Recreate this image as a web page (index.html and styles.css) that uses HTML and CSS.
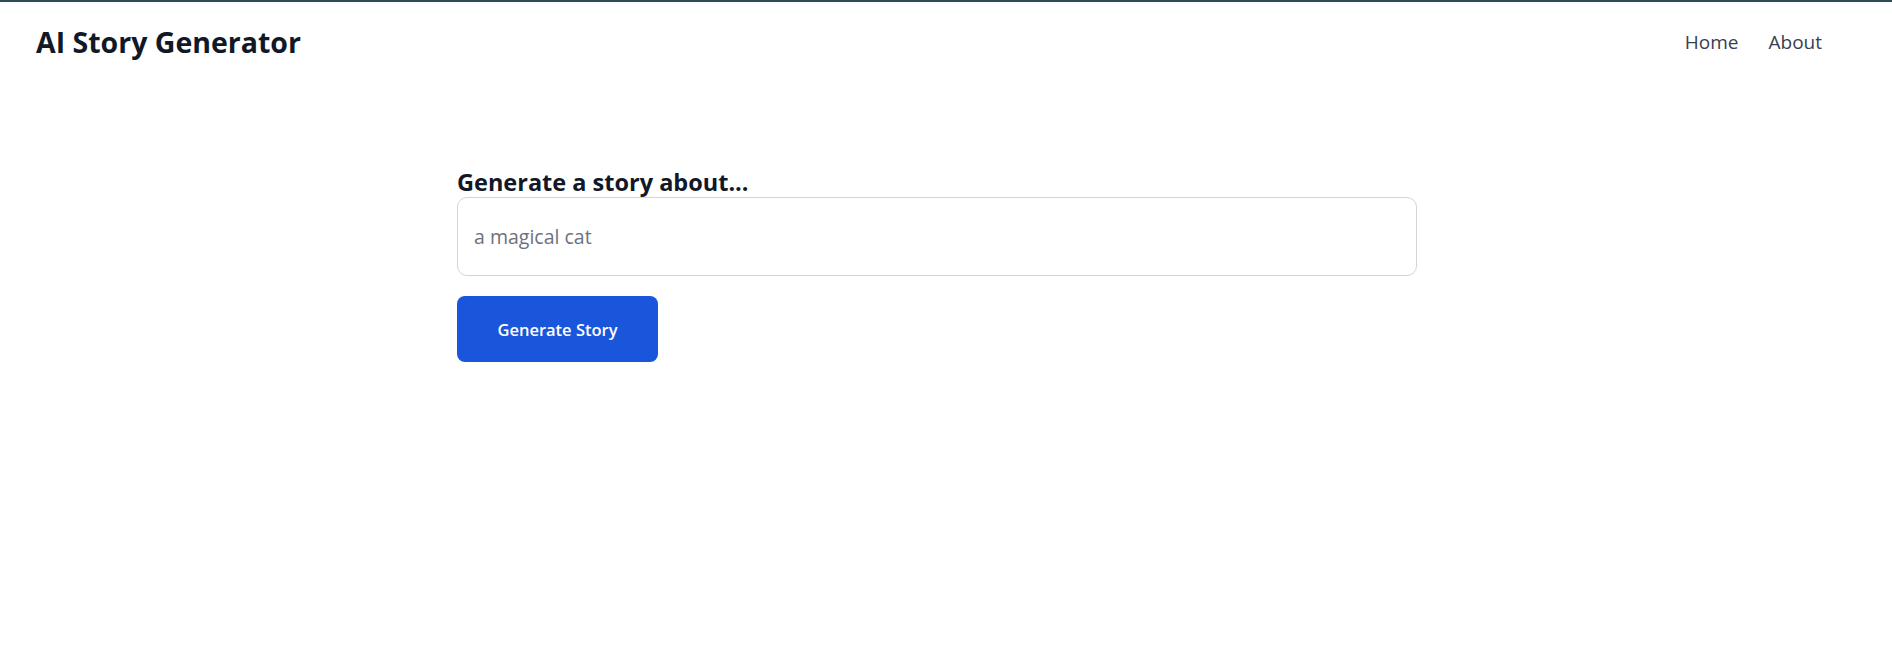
FILE: index.html
```html
<!DOCTYPE html>
<html lang="en">
<head>
  <meta charset="UTF-8">
  <title>AI Story Generator</title>
  <link rel="stylesheet" href="styles.css">
</head>
<body>

  <header class="topbar">
    <h1 class="brand">AI Story Generator</h1>
    <nav class="menu">
      <a href="#">Home</a>
      <a href="#">About</a>
    </nav>
  </header>

  <main class="container">
    <h2>Generate a story about...</h2>
    <input type="text" id="topic" placeholder="a magical cat" />
    <button onclick="generate()">Generate Story</button>
    <p id="story"></p>
  </main>

  <script>
    function generate() {
      const topic = document.getElementById('topic').value || 'a magical cat';
      document.getElementById('story').innerText = 'Once upon a time, there was ' + topic + '...';
    }
  </script>
</body>
</html>
```

FILE: styles.css
```css
body {
  margin: 0;
  font-family: "Open Sans", Arial, sans-serif;
  background: #fff;
  color: #111827;
  border-top: 2px solid #2f4b55;
}

.topbar {
  display: flex;
  justify-content: space-between;
  align-items: center;
  padding: 0 70px 0 36px;
  height: 80px;
}

.brand {
  margin: 0;
  font-size: 28.5px;
  font-weight: 700;
}

.menu {
  display: flex;
  gap: 30px;
}

.menu a {
  color: #374151;
  text-decoration: none;
  font-size: 19px;
}

.container {
  width: 960px;
  margin: 0 0 0 457px;
  padding-top: 85px;
}

h2 {
  margin: 0;
  font-size: 23.5px;
  font-weight: 700;
  line-height: 30px;
}

input {
  display: block;
  box-sizing: border-box;
  width: 100%;
  height: 79px;
  padding: 0 16px;
  border: 1px solid #d1d5db;
  border-radius: 10px;
  font-family: inherit;
  font-size: 19.5px;
  color: #111827;
}

input::placeholder {
  color: #6b7280;
}

button {
  margin-top: 20px;
  width: 201px;
  height: 66px;
  border: none;
  border-radius: 8px;
  background: #1a56db;
  color: #fff;
  font-family: inherit;
  font-size: 16.5px;
  font-weight: 600;
  cursor: pointer;
}
```
